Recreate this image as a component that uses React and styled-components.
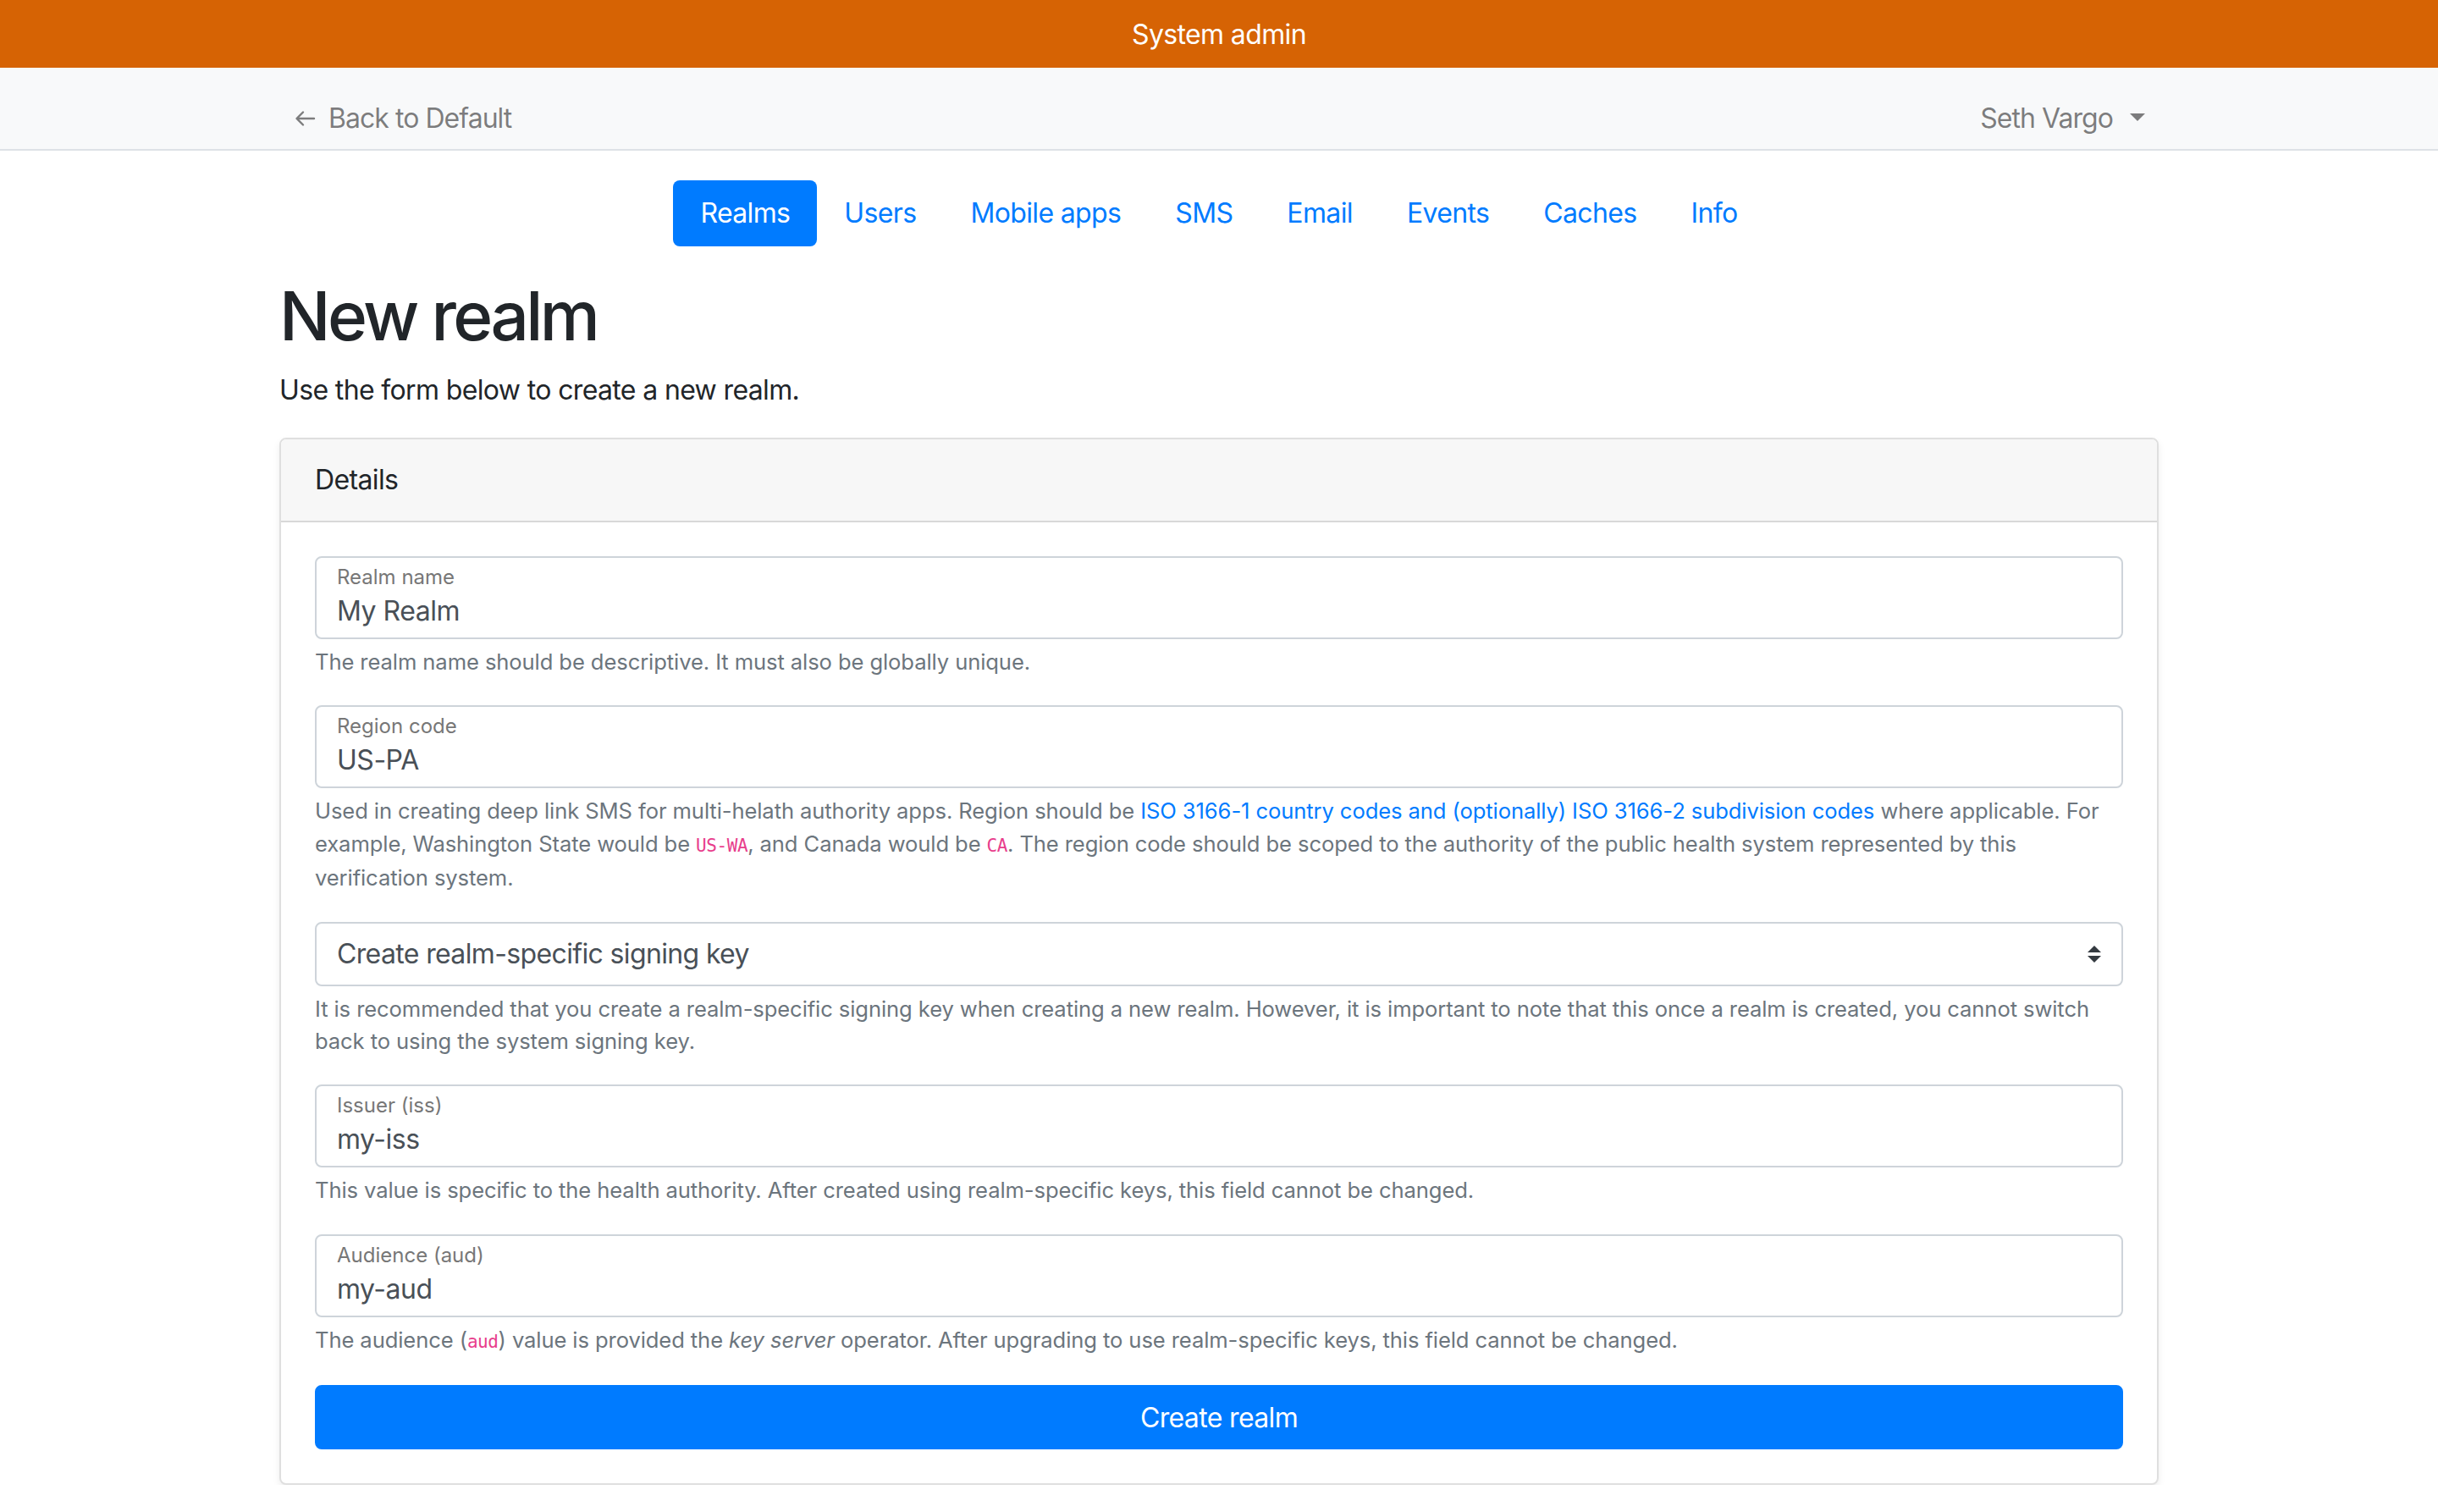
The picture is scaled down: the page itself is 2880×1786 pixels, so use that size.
import React from "react";
import styled, { createGlobalStyle } from "styled-components";

const GlobalStyle = createGlobalStyle`
  * { box-sizing: border-box; }
  body {
    margin: 0;
    font-family: Inter, "Noto Sans", "Liberation Sans", sans-serif;
    font-size: 32px;
    line-height: 1.5;
    letter-spacing: -0.02em;
    color: #212529;
    background: #fff;
  }
`;

const TopBar = styled.div`
  height: 80px;
  background-color: #d66304;
  color: #fff;
  display: flex;
  align-items: center;
  justify-content: center;
  font-size: 32px;
  padding-top: 2px;
`;

const NavBar = styled.div`
  height: 98px;
  background-color: #f8f9fa;
  border-bottom: 2px solid #dee2e6;
`;

const Container = styled.div`
  max-width: 2280px;
  margin: 0 auto;
  padding: 0 30px;
`;

const NavInner = styled(Container)`
  display: flex;
  justify-content: space-between;
  align-items: center;
  padding-top: 36px;
`;

const NavLink = styled.a`
  display: flex;
  align-items: center;
  padding: 0 16px;
  color: rgba(0, 0, 0, 0.5);
  text-decoration: none;
  line-height: 48px;
  letter-spacing: -0.03em;
`;

const Caret = styled.span`
  display: inline-block;
  margin-left: 20px;
  border-top: 9px solid rgba(0, 0, 0, 0.5);
  border-left: 9px solid transparent;
  border-right: 9px solid transparent;
  transform: translateY(-2px);
`;

const Pills = styled.nav`
  display: flex;
  justify-content: center;
  margin-top: 35px;
`;

const Pill = styled.a`
  padding: 15px 32px;
  line-height: 48px;
  border-radius: 8px;
  text-decoration: none;
  color: ${(p) => (p.active ? "#fff" : "#007bff")};
  background: ${(p) => (p.active ? "#007bff" : "transparent")};
`;

const Title = styled.h1`
  font-size: 80px;
  font-weight: 500;
  line-height: 1.2;
  letter-spacing: -0.045em;
  margin: 34px 0 16px;
`;

const Lead = styled.p`
  margin: 0 0 32px;
`;

const Card = styled.div`
  border: 2px solid rgba(0, 0, 0, 0.125);
  border-radius: 8px;
  box-shadow: 0 4px 8px rgba(0, 0, 0, 0.075);
  overflow: hidden;
`;

const CardHeader = styled.div`
  padding: 24px 40px;
  background: #f7f7f7;
  border-bottom: 2px solid rgba(0, 0, 0, 0.125);
`;

const CardBody = styled.div`
  padding: 40px;
`;

const Group = styled.div`
  margin-bottom: 32px;
`;

const FloatBox = styled.div`
  border: 2px solid #ced4da;
  border-radius: 8px;
  padding: 6px 24px 7px;
`;

const FloatLabel = styled.div`
  font-size: 24px;
  line-height: 33px;
  letter-spacing: 0;
  color: #777;
`;

const FloatValue = styled.div`
  font-size: 32px;
  line-height: 48px;
  letter-spacing: -0.015em;
  color: #495057;
`;

const Select = styled.div`
  height: 76px;
  border: 2px solid #ced4da;
  border-radius: 8px;
  padding: 0 24px;
  display: flex;
  align-items: center;
  justify-content: space-between;
  color: #495057;
`;

const Help = styled.div`
  margin-top: 8px;
  font-size: 25.6px;
  line-height: 38.4px;
  letter-spacing: -0.1px;
  color: #6c757d;
`;

const Link = styled.a`
  color: #007bff;
  text-decoration: none;
`;

const Code = styled.code`
  font-family: "DejaVu Sans Mono", "Liberation Mono", monospace;
  font-size: 21px;
  letter-spacing: -0.02em;
  color: #e83e8c;
`;

const Button = styled.button`
  display: block;
  width: 100%;
  height: 76px;
  border: 2px solid #007bff;
  border-radius: 8px;
  background: #007bff;
  color: #fff;
  font-family: inherit;
  font-size: 32px;
  letter-spacing: -0.02em;
`;

const BackArrow = () => (
  <svg width="30" height="24" viewBox="0 0 30 24" style={{ marginRight: 12 }}>
    <path
      d="M25 12H5M12 4.5L4.5 12L12 19.5"
      fill="none"
      stroke="rgba(0,0,0,0.5)"
      strokeWidth="2.4"
      strokeLinecap="round"
      strokeLinejoin="round"
    />
  </svg>
);

const SortIcon = () => (
  <svg width="16" height="20" viewBox="0 0 4 5">
    <path d="M2 0L0 2h4zm0 5L0 3h4z" fill="#343a40" />
  </svg>
);

const Field = ({ label, value, children }) => (
  <Group>
    <FloatBox>
      <FloatLabel>{label}</FloatLabel>
      <FloatValue>{value}</FloatValue>
    </FloatBox>
    <Help>{children}</Help>
  </Group>
);

const tabs = ["Realms", "Users", "Mobile apps", "SMS", "Email", "Events", "Caches", "Info"];

const App = () => {
  return (
    <>
      <GlobalStyle />
      <TopBar>System admin</TopBar>
      <NavBar>
        <NavInner>
          <NavLink href="#">
            <BackArrow />
            Back to Default
          </NavLink>
          <NavLink href="#">
            Seth Vargo
            <Caret />
          </NavLink>
        </NavInner>
      </NavBar>
      <Container>
        <Pills>
          {tabs.map((t) => (
            <Pill key={t} href="#" active={t === "Realms" ? 1 : 0}>
              {t}
            </Pill>
          ))}
        </Pills>
        <Title>New realm</Title>
        <Lead>Use the form below to create a new realm.</Lead>
        <Card>
          <CardHeader>Details</CardHeader>
          <CardBody>
            <Field label="Realm name" value="My Realm">
              The realm name should be descriptive. It must also be globally unique.
            </Field>
            <Field label="Region code" value="US-PA">
              Used in creating deep link SMS for multi-helath authority apps. Region should be{" "}
              <Link href="#">
                ISO 3166-1 country codes and (optionally) ISO 3166-2 subdivision codes
              </Link>{" "}
              where applicable. For example, Washington State would be <Code>US-WA</Code>, and
              Canada would be <Code>CA</Code>. The region code should be scoped to the authority of
              the public health system represented by this verification system.
            </Field>
            <Group>
              <Select>
                Create realm-specific signing key
                <SortIcon />
              </Select>
              <Help>
                It is recommended that you create a realm-specific signing key when creating a new
                realm. However, it is important to note that this once a realm is created, you
                cannot switch back to using the system signing key.
              </Help>
            </Group>
            <Field label="Issuer (iss)" value="my-iss">
              This value is specific to the health authority. After created using realm-specific
              keys, this field cannot be changed.
            </Field>
            <Field label="Audience (aud)" value="my-aud">
              The audience (<Code>aud</Code>) value is provided the <em>key server</em> operator.
              After upgrading to use realm-specific keys, this field cannot be changed.
            </Field>
            <Button>Create realm</Button>
          </CardBody>
        </Card>
      </Container>
    </>
  );
};

export default App;
